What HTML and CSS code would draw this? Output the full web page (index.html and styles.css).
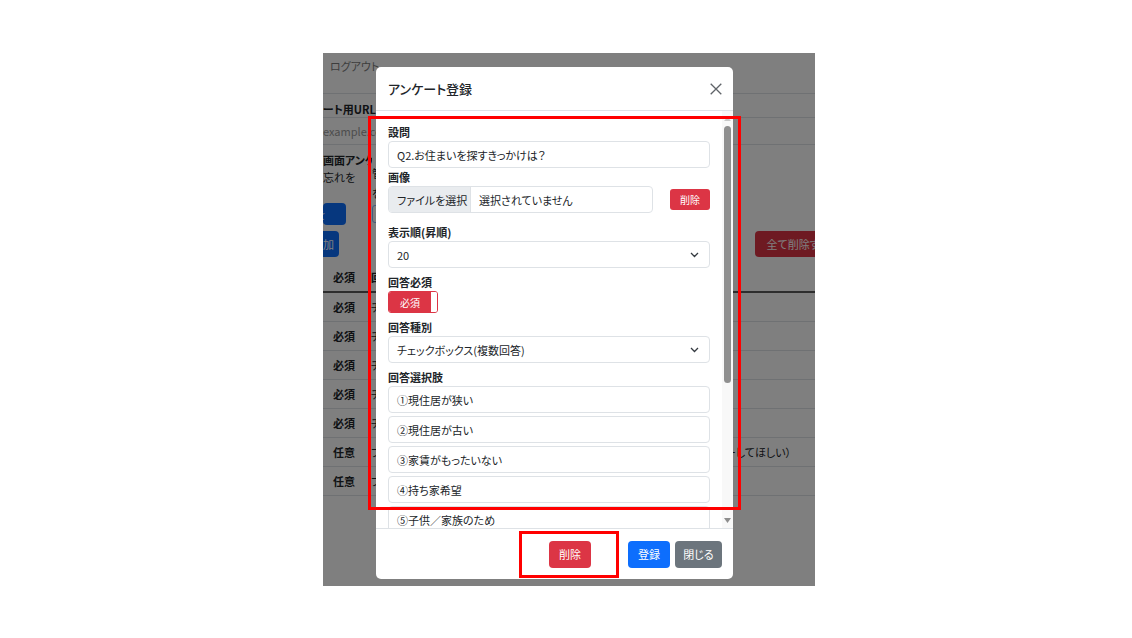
FILE: index.html
```html
<!DOCTYPE html>
<html lang="ja">
<head>
<meta charset="utf-8">
<title>アンケート登録</title>
<link rel="stylesheet" href="styles.css">
</head>
<body>
<div class="slide">
  <div class="stage">
    <div class="page">
      <nav class="nav"><span>ログアウト</span></nav>
      <div class="url-title">ート用URL</div>
      <div class="url-input">example.com</div>
      <div class="settings">
        <div class="set-left">
          <div class="set-title">画面アンケー</div>
          <div class="set-text">忘れを</div>
          <div class="pbtn pbtn-blue btn-frag">を</div>
        </div>
        <div class="set-right">
          <div class="set-text r1">管</div>
          <div class="set-text r2">を</div>
          <div class="set-box"></div>
        </div>
      </div>
      <div class="action-row">
        <div class="pbtn pbtn-blue btn-add">追加</div>
        <div class="pbtn pbtn-red btn-delall">全て削除する</div>
      </div>
      <div class="q-table">
        <div class="q-row q-head"><span>必須</span><span class="clip">回</span><span></span></div>
        <div class="q-row"><span>必須</span><span class="clip">チ</span><span></span></div>
        <div class="q-row"><span>必須</span><span class="clip">チ</span><span></span></div>
        <div class="q-row"><span>必須</span><span class="clip">チ</span><span></span></div>
        <div class="q-row"><span>必須</span><span class="clip">チ</span><span></span></div>
        <div class="q-row"><span>必須</span><span class="clip">チ</span><span></span></div>
        <div class="q-row"><span>任意</span><span class="clip">フ</span><span class="tail">ーしてほしい）</span></div>
        <div class="q-row"><span>任意</span><span class="clip">フ</span><span></span></div>
      </div>
    </div>
    <div class="backdrop"></div>
    <div class="modal">
      <div class="modal-header">
        <h5 class="modal-title">アンケート登録</h5>
        <svg class="close" width="12" height="12" viewBox="0 0 12 12"><path d="M0.7 0.7L11.3 11.3M11.3 0.7L0.7 11.3" stroke="#5f6368" stroke-width="1.3" fill="none"/></svg>
      </div>
      <div class="modal-body">
        <div class="form">
          <div class="group">
            <label class="label">設問</label>
            <div class="field">Q2.お住まいを探すきっかけは？</div>
          </div>
          <div class="group group-img">
            <label class="label">画像</label>
            <div class="file-row">
              <div class="file-input">
                <span class="file-btn">ファイルを選択</span>
                <span class="file-name">選択されていません</span>
              </div>
              <span class="btn-sm">削除</span>
            </div>
          </div>
          <div class="group group-gap">
            <label class="label">表示順(昇順)</label>
            <div class="field select"><span>20</span><svg width="9" height="6" viewBox="0 0 9 6"><path d="M1 1l3.5 3.5L8 1" stroke="#343a40" stroke-width="1.3" fill="none"/></svg></div>
          </div>
          <div class="group group-gap">
            <label class="label">回答必須</label>
            <div class="toggle"><span class="toggle-on">必須</span><span class="toggle-handle"></span></div>
          </div>
          <div class="group group-gap">
            <label class="label">回答種別</label>
            <div class="field select"><span>チェックボックス(複数回答)</span><svg width="9" height="6" viewBox="0 0 9 6"><path d="M1 1l3.5 3.5L8 1" stroke="#343a40" stroke-width="1.3" fill="none"/></svg></div>
          </div>
          <div class="group">
            <label class="label">回答選択肢</label>
            <div class="opts">
              <div class="field">①現住居が狭い</div>
              <div class="field">②現住居が古い</div>
              <div class="field">③家賃がもったいない</div>
              <div class="field">④持ち家希望</div>
              <div class="field">⑤子供／家族のため</div>
            </div>
          </div>
        </div>
        <div class="sb">
          <svg class="sb-arrow" width="7" height="4" viewBox="0 0 7 4"><path d="M0 4L3.5 0L7 4Z" fill="#c8c8c8"/></svg>
          <div class="sb-thumb"></div>
          <div class="sb-fill"></div>
          <svg class="sb-arrow sb-down" width="7" height="5" viewBox="0 0 7 5"><path d="M0 0L7 0L3.5 5Z" fill="#8d8d8d"/></svg>
        </div>
      </div>
      <div class="modal-footer">
        <span class="btn btn-del">削除</span>
        <span class="btn btn-reg">登録</span>
        <span class="btn btn-close">閉じる</span>
      </div>
    </div>
    <div class="mark mark-body"></div>
    <div class="mark mark-foot"></div>
  </div>
</div>
</body>
</html>
```
FILE: styles.css
```css
* { box-sizing: border-box; margin: 0; padding: 0; }
html, body { width: 1132px; height: 638px; overflow: hidden; background: #fff; }
body {
  font-family: "Noto Sans CJK JP", "Noto Sans", sans-serif;
  font-feature-settings: "palt";
  color: #212529;
  font-size: 11px;
}
.slide { padding: 53px 0 0 323px; }
.stage { position: relative; width: 492px; height: 533px; overflow: hidden; }

/* background page */
.page { width: 492px; height: 533px; background: #fff; overflow: hidden; line-height: 17px; }
.nav { height: 41px; border-bottom: 1px solid #dee2e6; padding: 4.5px 0 0 7px; color: #7a7a7a; }
.url-title { margin-top: 8px; line-height: 15px; font-weight: 700; }
.url-input { height: 28px; border-top: 1px solid #dee2e6; border-bottom: 1px solid #dee2e6; line-height: 26px; color: #9a9a9a; white-space: nowrap; }
.settings { display: flex; height: 80px; }
.set-left { width: 49px; flex: none; overflow: hidden; }
.set-title { margin-top: 7px; font-weight: 700; white-space: nowrap; }
.set-text { white-space: nowrap; }
.set-right { width: 140px; }
.set-right .r1 { margin-top: 19.5px; }
.set-right .r2 { margin-top: 3px; }
.set-box { margin-top: 3.5px; height: 18px; width: 120px; border: 1px solid #86b7fe; border-radius: 3px; }
.pbtn { height: 26px; border-radius: 4px; color: #fff; display: flex; align-items: center; justify-content: center; white-space: nowrap; overflow: hidden; }
.pbtn-blue { background: #0d6efd; }
.pbtn-red { background: #dc3545; }
.btn-frag { margin-top: 17px; height: 22px; width: 23px; justify-content: flex-start; text-indent: -8px; }
.action-row { display: flex; justify-content: space-between; margin-top: 6px; margin-right: -26px; }
.btn-add { margin-left: -16px; width: 32px; }
.btn-delall { width: 86px; }
.q-table { margin-top: 7px; }
.q-row { display: grid; grid-template-columns: 48px 354px 1fr; height: 29px; border-bottom: 1px solid #dee2e6; align-items: center; white-space: nowrap; overflow: hidden; }
.q-row > span:first-child { padding-left: 10px; font-weight: 700; }
.q-head { border-bottom: 2px solid #5a5a5a; font-weight: 700; }
.clip { display: block; }

.backdrop { position: absolute; inset: 0; background: rgba(0, 0, 0, 0.5); }

/* modal */
.modal { position: absolute; left: 53px; top: 14px; width: 357px; height: 512px; background: #fff; border-radius: 5px; display: flex; flex-direction: column; overflow: hidden; }
.modal-header { height: 44px; flex: none; border-bottom: 1px solid #dee2e6; display: flex; align-items: center; justify-content: space-between; padding: 0 11px 0 12px; }
.modal-title { font-size: 13px; font-weight: 500; line-height: 20px; }
.close { display: block; }
.modal-body { flex: 1; display: flex; min-height: 0; }
.form { flex: 1; padding: 12px 12px 0; overflow: hidden; }
.label { display: block; font-weight: 700; line-height: 18px; }
.group-img { margin-bottom: 10px; }
.group-gap { margin-bottom: 5px; }
.field { height: 27px; border: 1px solid #dee2e6; border-radius: 4px; padding: 0 9px 0 8px; display: flex; align-items: center; white-space: nowrap; background: #fff; }
.select { justify-content: space-between; padding-right: 10px; }
.file-row { display: flex; align-items: center; gap: 17px; }
.file-input { width: 265px; height: 27px; border: 1px solid #dee2e6; border-radius: 4px; display: flex; align-items: stretch; overflow: hidden; }
.file-btn { width: 82px; flex: none; background: #e9ecef; border-right: 1px solid #dee2e6; display: flex; align-items: center; padding-left: 8px; }
.file-name { display: flex; align-items: center; padding-left: 8px; }
.btn-sm { width: 40px; height: 21px; border-radius: 3px; background: #dc3545; color: #fff; font-size: 10px; display: flex; align-items: center; justify-content: center; }
.toggle { width: 50px; height: 22px; border: 1px solid #dc3545; border-radius: 3px; display: flex; overflow: hidden; }
.toggle-on { flex: 1; background: #dc3545; color: #fff; font-size: 10px; display: flex; align-items: center; justify-content: center; }
.toggle-handle { width: 6px; background: #fff; }
.opts { display: flex; flex-direction: column; gap: 3px; }

.sb { width: 11px; flex: none; background: #f8f8f8; display: flex; flex-direction: column; align-items: center; }
.sb-arrow { display: block; margin-top: 6px; }
.sb-thumb { width: 7px; height: 257px; margin-top: 5px; border-radius: 4px; background: #8f8f8f; }
.sb-fill { flex: 1; }
.sb-down { margin: 0 0 5px; }

.modal-footer { height: 51px; flex: none; border-top: 1px solid #dee2e6; display: flex; align-items: center; justify-content: flex-end; gap: 5px; padding-right: 11px; }
.btn { height: 27px; border-radius: 4px; color: #fff; font-size: 11px; display: flex; align-items: center; justify-content: center; }
.btn-del { width: 42px; background: #dc3545; margin-right: 32px; }
.btn-reg { width: 42px; background: #0d6efd; }
.btn-close { width: 47px; background: #6c757d; }

/* annotations */
.mark { position: absolute; border: 3px solid #ff0000; }
.mark-body { left: 45px; top: 63px; width: 373px; height: 394px; }
.mark-foot { left: 196px; top: 478px; width: 100px; height: 47px; }
```
